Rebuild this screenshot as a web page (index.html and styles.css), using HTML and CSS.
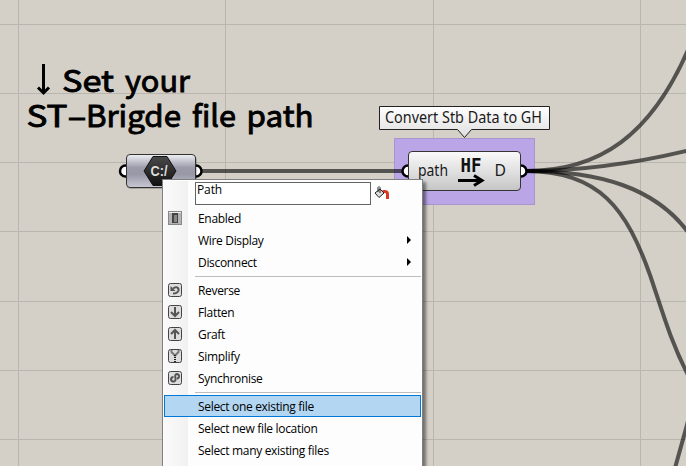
FILE: index.html
```html
<!DOCTYPE html>
<html lang="en">
<head>
<meta charset="utf-8">
<title>Grasshopper canvas</title>
<link rel="stylesheet" href="styles.css">
</head>
<body>
<main class="canvas">
<svg class="graph" width="686" height="466" viewBox="0 0 686 466">
  <defs>
    <linearGradient id="node" x1="0" y1="0" x2="0" y2="1"><stop offset="0" stop-color="#fafafa"/><stop offset=".45" stop-color="#e3e3e3"/><stop offset="1" stop-color="#c5c5c5"/></linearGradient>
    <linearGradient id="param" x1="0" y1="0" x2="0" y2="1"><stop offset="0" stop-color="#f0f0f4"/><stop offset=".15" stop-color="#d0d0da"/><stop offset=".4" stop-color="#9c9ba9"/><stop offset=".6" stop-color="#9998a6"/><stop offset="1" stop-color="#c8c7d4"/></linearGradient>
    <linearGradient id="tip" x1="0" y1="0" x2="0" y2="1"><stop offset="0" stop-color="#fff"/><stop offset="1" stop-color="#dedede"/></linearGradient>
    <linearGradient id="hex" x1="0" y1="0" x2="0" y2="1"><stop offset="0" stop-color="#4a4a4a"/><stop offset="1" stop-color="#111"/></linearGradient>
  </defs>
  <path class="grid" d="M0 24.5H686M0 93.5H686M0 162.5H686M0 231.5H686M0 301.5H686M0 370.5H686M0 439.5H686M18.5 0V466M225.5 0V466M433.5 0V466M640.5 0V466"/>
  <rect class="group" x="394.5" y="138.5" width="140" height="66"/>
  <path class="wire" d="M198 171H405"/>
  <path class="wire" d="M526 171C600 171 651 135 688 50"/>
  <path class="wire" d="M526 171C580 171 640 162 688 150.5"/>
  <path class="wire" d="M526 171C600 171 655 188 688 232"/>
  <path class="wire" d="M526 171C600 171 627 210 650 275C662 310 670 340 688 375"/>
  <path class="wire" d="M675 468C680 450 684 436 688 421"/>
  <g class="port"><circle cx="125.500" cy="171" r="5.500"/><circle cx="196" cy="171" r="5.500"/><circle cx="408" cy="171" r="5.500"/><circle cx="521" cy="171" r="5.500"/></g>
  <rect class="shade" x="127" y="156" width="70" height="33" rx="4"/>
  <rect class="box" x="126.500" y="154.500" width="69" height="33" rx="3.500" fill="url(#param)"/>
  <path d="M153 156.500H167L176 171L167 185.500H153L144 171Z" fill="url(#hex)" stroke="#111"/>
  <text class="drive" x="150.500" y="176" textLength="17" lengthAdjust="spacingAndGlyphs">C:/</text>
  <rect class="box" x="408.500" y="151.500" width="112" height="39" rx="3.500" fill="url(#node)"/>
  <text class="label" x="418" y="176" textLength="30" lengthAdjust="spacingAndGlyphs">path</text>
  <text class="label" x="494.500" y="176" textLength="11.500" lengthAdjust="spacingAndGlyphs">D</text>
  <text class="hf" x="460.500" y="171.500" textLength="21" lengthAdjust="spacingAndGlyphs">HF</text>
  <path class="hf-arrow" d="M458 180.500H482M474 175.500L482 180.500L474 185.500"/>
  <path class="tip" d="M379.500 106.500H549.500V129.500H471.500L464.500 137.500L457.500 129.500H379.500Z" fill="url(#tip)"/>
  <text class="label" x="385" y="123" textLength="157" lengthAdjust="spacingAndGlyphs">Convert Stb Data to GH</text>
  <path class="down" d="M43.500 64V92M38 87.500L43.500 93L49 87.500"/>
  <text class="title" y="92"><tspan x="62" textLength="52" lengthAdjust="spacingAndGlyphs">Set</tspan> <tspan x="125" textLength="65" lengthAdjust="spacingAndGlyphs">your</tspan></text>
  <text class="title" y="127"><tspan x="26.500" textLength="41" lengthAdjust="spacingAndGlyphs">ST</tspan><tspan x="67" textLength="20" lengthAdjust="spacingAndGlyphs">-</tspan><tspan x="86" textLength="95" lengthAdjust="spacingAndGlyphs">Brigde</tspan> <tspan x="192" textLength="44" lengthAdjust="spacingAndGlyphs">file</tspan> <tspan x="246.500" textLength="67" lengthAdjust="spacingAndGlyphs">path</tspan></text>
</svg>
<div class="menu">
  <div class="name-row"><div class="field">Path</div>
    <svg class="bucket" width="16" height="16" viewBox="0 0 16 16"><path d="M8.500 6.500H10.500Q13.500 6.500 13.500 9V14" fill="none" stroke="#d93a24" stroke-width="3"/><path d="M1 8L6 4L10 8L5 12.500Z" fill="#ddd" stroke="#222"/><path d="M4 7V2.500Q5 .5 6 2.500V8" fill="none" stroke="#222"/></svg>
  </div>
  <div class="item"><svg class="icon" viewBox="0 0 14 14"><rect x=".5" y=".5" width="13" height="13" fill="#b4b4b4" stroke="#888"/><path d="M1 1.500H13" stroke="#eee"/><rect x="4" y="2" width="6" height="10" fill="#444"/><rect x="6" y="4" width="3" height="7" fill="#888"/></svg>Enabled</div>
  <div class="item sub">Wire Display</div>
  <div class="item sub">Disconnect</div>
  <div class="rule"></div>
  <div class="item"><svg class="icon" viewBox="0 0 14 14"><rect class="key" x=".5" y=".5" width="13" height="13" rx="2"/><path class="mark" d="M5 5.500C8 3 11 4.500 10.500 7.500Q9.500 10.500 5 10.500"/><path d="M2.500 3V8H7.500Z" fill="#555"/></svg>Reverse</div>
  <div class="item"><svg class="icon" viewBox="0 0 14 14"><rect class="key" x=".5" y=".5" width="13" height="13" rx="2"/><path class="mark" d="M7 2V11M3 7L7 11L11 7"/></svg>Flatten</div>
  <div class="item"><svg class="icon" viewBox="0 0 14 14"><rect class="key" x=".5" y=".5" width="13" height="13" rx="2"/><path class="mark" d="M7 12V3M3 7L7 3L11 7"/></svg>Graft</div>
  <div class="item"><svg class="icon" viewBox="0 0 14 14"><rect class="key" x=".5" y=".5" width="13" height="13" rx="2"/><path class="zip" d="M3.500 1V3L7 6.500L10.500 3V1"/><path class="teeth" d="M7 6V13"/></svg>Simplify</div>
  <div class="item"><svg class="icon" viewBox="0 0 14 14"><rect class="key" x=".5" y=".5" width="13" height="13" rx="2"/><path class="mark" d="M5.500 6Q3 6 3 8.500Q3.500 11 6 10.500Q8 10 7.500 7Q6.500 3 9 3Q11.500 3.500 11 6Q10.500 7.500 9 7.500"/></svg>Synchronise</div>
  <div class="rule"></div>
  <div class="item selected">Select one existing file</div>
  <div class="item">Select new file location</div>
  <div class="item">Select many existing files</div>
</div>
</main>
</body>
</html>
```
FILE: styles.css
```css
* { box-sizing: border-box; }
body { margin: 0; }
.canvas { position: relative; width: 686px; height: 466px; overflow: hidden; background: #d4d0c8; }
.graph { display: block; }
.grid { fill: none; stroke: #b9b6af; }
.group { fill: #baa5e7; stroke: #a895ce; }
.wire { fill: none; stroke: #000; stroke-opacity: .6; stroke-width: 4; }
.port { fill: #fff; stroke: #000; stroke-width: 2.5; }
.shade { fill: #0003; }
.box { stroke: #333; }
.tip { stroke: #222; }
.label { font: 16px "Noto Sans", "Open Sans", sans-serif; fill: #1a1a1a; }
.drive { font: bold 14px "Liberation Sans", sans-serif; fill: #ddd; }
.hf { font: bold 20px "DejaVu Sans Mono", monospace; fill: #111; }
.hf-arrow { fill: none; stroke: #000; stroke-width: 3; }
.down { fill: none; stroke: #000; stroke-width: 3; }
.title { font: 30px "Noto Sans CJK JP", sans-serif; fill: #000; stroke: #000; stroke-width: .9; }
.menu {
  position: absolute; left: 162px; top: 179px; width: 261px; height: 300px; padding: 1px;
  border: 1px solid #808080; box-shadow: 3px 3px 3px #0007;
  background: linear-gradient(90deg, #fafafa, #f1f1f1) 1px 1px / 24px 100% no-repeat, #fdfdfd;
  font: 12px/22px "Open Sans", "Noto Sans", sans-serif; letter-spacing: -.32px; color: #000;
}
.name-row { display: flex; gap: 3px; height: 26px; padding: 1px 0 0 31px; }
.field { width: 176px; height: 23px; padding-left: 1px; border: 1px solid #646464; background: #fff; line-height: 14px; letter-spacing: -.1px; }
.bucket { margin-top: 3px; }
.item { position: relative; display: flex; align-items: center; height: 22px; padding-left: 34px; line-height: 23px; white-space: nowrap; }
.icon { width: 14px; height: 14px; margin: 0 16px 0 -30px; }
.sub::after { content: ""; margin-left: auto; margin-right: 10px; border: 4px solid transparent; border-left-color: #000; border-right: 0; }
.rule { height: 3px; margin: 3px 0 0 31px; border-top: 1px solid #bdbdbd; }
.selected { background: #b3d7f3; box-shadow: inset 0 0 0 1px #0078d7; }
.key { fill: #ddd; stroke: #444; }
.mark { fill: none; stroke: #555; stroke-width: 2; }
.zip { fill: none; stroke: #777; stroke-width: 2; }
.teeth { fill: none; stroke: #222; stroke-width: 2; stroke-dasharray: 1 1; }
```
